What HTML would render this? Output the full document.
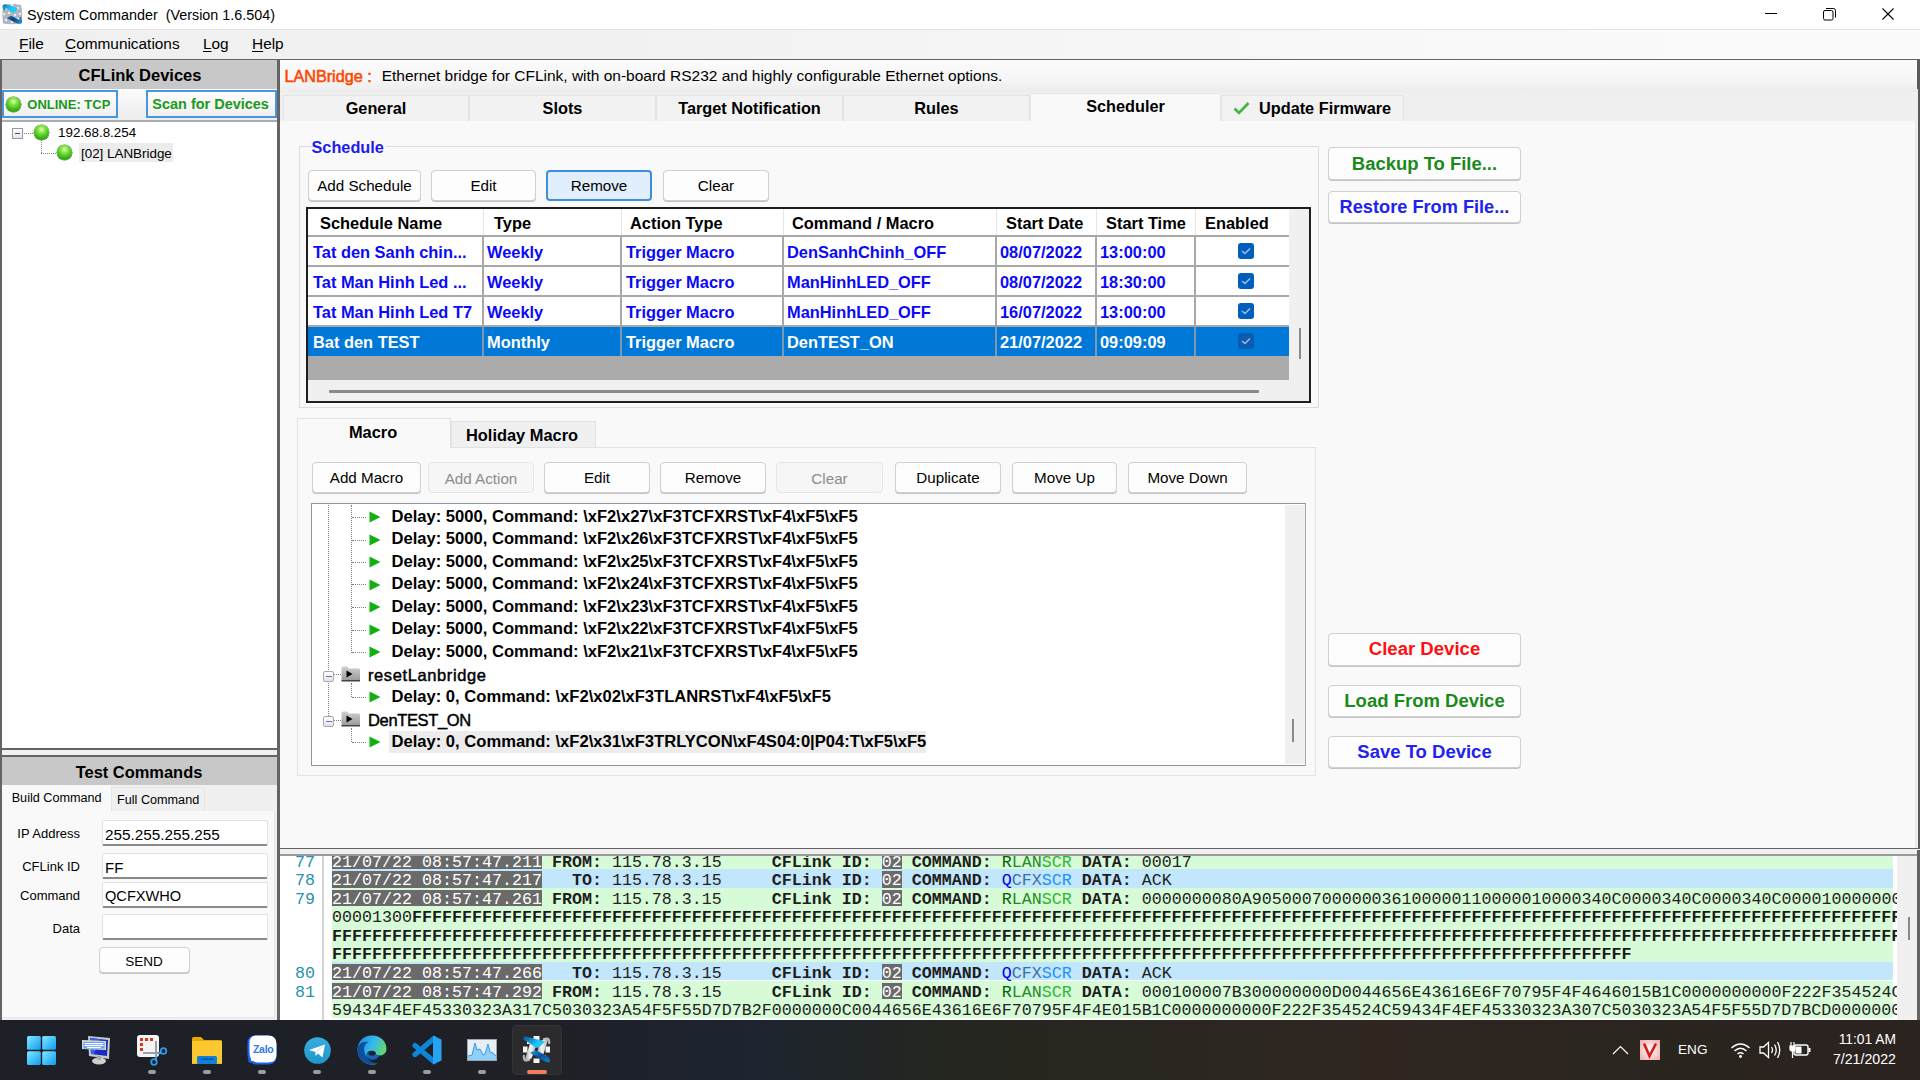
<!DOCTYPE html><html><head><meta charset="utf-8"><style>
html,body{margin:0;padding:0;}
body{width:1920px;height:1080px;overflow:hidden;position:relative;background:#f0f0f0;font-family:"Liberation Sans",sans-serif;}
div{box-sizing:border-box;}
.btn{position:absolute;background:#fdfdfd;border:1px solid #d0d0d0;border-radius:4px;box-shadow:0 1px 0 #c4c4c4;}
.mono{font-family:"Liberation Mono",monospace;}
</style></head><body>
<div style="position:absolute;left:0px;top:0px;width:1920px;height:29px;background:#fff"></div>
<svg style="position:absolute;left:0px;top:0px" width="30" height="29" viewBox="0 0 30 29">
<defs><linearGradient id="ib1" x1="0" y1="0" x2="1" y2="0.5"><stop offset="0" stop-color="#1a6fb5"/><stop offset="0.7" stop-color="#12d0ff"/></linearGradient>
<linearGradient id="ib2" x1="0" y1="0" x2="1" y2="0.3"><stop offset="0" stop-color="#1a7ac0"/><stop offset="0.5" stop-color="#0a3d78"/><stop offset="1" stop-color="#1a8ad0"/></linearGradient></defs>
<path d="M3 5 Q12 3 21 5 Q23 14 21.5 23.5 Q12 25 3 23.5 Q1.5 14 3 5Z" fill="#b4b4bc"/>
<g fill="#eef2f6" opacity="0.9"><circle cx="6" cy="8" r="1.3"/><circle cx="12" cy="5" r="1.3"/><circle cx="18" cy="8" r="1.3"/><circle cx="4" cy="14" r="1.3"/><circle cx="9" cy="13" r="1.3"/><circle cx="15" cy="15" r="1.3"/><circle cx="20" cy="14" r="1.3"/><circle cx="6" cy="20" r="1.3"/><circle cx="12" cy="22" r="1.3"/><circle cx="18" cy="19" r="1.3"/></g>
<path d="M2.5 6 Q3 3.8 5.5 4.3 Q11 6 17.5 8 Q16.5 11.5 13.5 12.8 Q10 11.5 7 8.5 Q5 7.5 4.5 11.5 Q2.5 9.5 2.5 6Z" fill="url(#ib1)"/>
<path d="M7 18.5 Q9 15.5 11.5 16 Q15.5 18.5 19.5 20 Q19.5 17.5 20 16.5 Q22.5 19 22 23 Q19.5 24.8 15 22.5 Q10 19.5 7 18.5Z" fill="url(#ib2)"/>
</svg>
<div style="position:absolute;left:27px;top:7.85px;font-size:14.35px;line-height:14.35px;font-weight:400;color:#000;white-space:pre;">System Commander&nbsp; (Version 1.6.504)</div>
<div style="position:absolute;left:1765px;top:13px;width:12px;height:1px;background:#000"></div>
<svg style="position:absolute;left:1823px;top:8px" width="13" height="13" viewBox="0 0 13 13"><rect x="0.5" y="2.5" width="9.5" height="9.5" rx="1.5" fill="none" stroke="#000" stroke-width="1"/><path d="M3 0.5 H10.5 Q12.5 0.5 12.5 2.5 V9.5" fill="none" stroke="#000" stroke-width="1"/></svg>
<svg style="position:absolute;left:1882px;top:8px" width="12" height="12" viewBox="0 0 12 12"><path d="M0.5 0.5 L11.5 11.5 M11.5 0.5 L0.5 11.5" stroke="#000" stroke-width="1.1"/></svg>
<div style="position:absolute;left:0px;top:29px;width:1920px;height:30px;background:linear-gradient(90deg,#f0f0f0 0,#f1f1f1 600px,#f6f6f6 1100px,#f9f9f9 1500px,#fbfbfb 1920px);border-top:1px solid #e4e4e4"></div>
<div style="position:absolute;left:19px;top:35.96px;font-size:15.4px;line-height:15.4px;font-weight:400;color:#000;white-space:pre;"><u style="text-underline-offset:2px">F</u>ile</div>
<div style="position:absolute;left:65px;top:35.96px;font-size:15.4px;line-height:15.4px;font-weight:400;color:#000;white-space:pre;"><u style="text-underline-offset:2px">C</u>ommunications</div>
<div style="position:absolute;left:203px;top:35.96px;font-size:15.4px;line-height:15.4px;font-weight:400;color:#000;white-space:pre;"><u style="text-underline-offset:2px">L</u>og</div>
<div style="position:absolute;left:252px;top:35.96px;font-size:15.4px;line-height:15.4px;font-weight:400;color:#000;white-space:pre;"><u style="text-underline-offset:2px">H</u>elp</div>
<div style="position:absolute;left:0px;top:59px;width:1920px;height:1px;background:#646464"></div>
<div style="position:absolute;left:0px;top:59px;width:2px;height:961px;background:#646464"></div>
<div style="position:absolute;left:2px;top:60px;width:275px;height:29px;background:#c8c8c8"></div>
<div style="position:absolute;left:140px;top:67.03px;font-size:16.5px;line-height:16.5px;font-weight:700;color:#000;white-space:pre;transform:translateX(-50%)">CFLink Devices</div>
<div style="position:absolute;left:2px;top:89px;width:275px;height:32px;background:linear-gradient(#fbfbfb,#ececec)"></div>
<div style="position:absolute;left:2px;top:90px;width:116px;height:28px;background:linear-gradient(#fdfdfd,#f0f0f0);border:2px solid #4796e2"></div>
<div style="position:absolute;left:146px;top:90px;width:131px;height:28px;background:linear-gradient(#fdfdfd,#f0f0f0);border:2px solid #4796e2"></div>
<div style="position:absolute;left:6px;top:97px;width:15px;height:15px;border-radius:50%;background:radial-gradient(circle at 50% 30%,#d8ffb0 0,#7ee040 30%,#2fae10 70%,#1a7a08 100%);box-shadow:0 0 0 0.5px #3a8a20"></div>
<div style="position:absolute;left:27.3px;top:98.00px;font-size:13px;line-height:13px;font-weight:700;color:#1a9a1a;white-space:pre;">ONLINE: TCP</div>
<div style="position:absolute;left:152.3px;top:96.74px;font-size:14.48px;line-height:14.48px;font-weight:700;color:#1a9a1a;white-space:pre;">Scan for Devices</div>
<div style="position:absolute;left:2px;top:122px;width:275px;height:626px;background:#fff"></div>
<div style="position:absolute;left:2px;top:120px;width:275px;height:2px;background:#a9adb2"></div>
<div style="position:absolute;left:12px;top:128px;width:11px;height:11px;border:1px solid #9a9a9a;background:linear-gradient(#fff,#e6e6e6)"></div>
<div style="position:absolute;left:15px;top:133px;width:5px;height:1px;background:#3050a0"></div>
<div style="position:absolute;left:24px;top:133px;width:9px;border-top:1px dotted #808080"></div>
<div style="position:absolute;left:34px;top:125px;width:15px;height:15px;border-radius:50%;background:radial-gradient(circle at 50% 30%,#d8ffb0 0,#7ee040 30%,#2fae10 70%,#1a7a08 100%);box-shadow:0 0 0 0.5px #3a8a20"></div>
<div style="position:absolute;left:58px;top:126.16px;font-size:13.4px;line-height:13.4px;font-weight:400;color:#000;white-space:pre;">192.68.8.254</div>
<div style="position:absolute;left:41px;top:140px;height:13px;border-left:1px dotted #808080"></div>
<div style="position:absolute;left:41px;top:153px;width:15px;border-top:1px dotted #808080"></div>
<div style="position:absolute;left:57px;top:145px;width:15px;height:15px;border-radius:50%;background:radial-gradient(circle at 50% 30%,#d8ffb0 0,#7ee040 30%,#2fae10 70%,#1a7a08 100%);box-shadow:0 0 0 0.5px #3a8a20"></div>
<div style="position:absolute;left:79px;top:143px;width:94px;height:19px;background:#ececec"></div>
<div style="position:absolute;left:81px;top:146.66px;font-size:13.4px;line-height:13.4px;font-weight:400;color:#000;white-space:pre;">[02] LANBridge</div>
<div style="position:absolute;left:0px;top:748px;width:277px;height:2px;background:#646464"></div>
<div style="position:absolute;left:2px;top:750px;width:275px;height:5px;background:#f0f0f0"></div>
<div style="position:absolute;left:0px;top:755px;width:277px;height:2px;background:#646464"></div>
<div style="position:absolute;left:2px;top:757px;width:275px;height:28px;background:#c8c8c8"></div>
<div style="position:absolute;left:139px;top:764.08px;font-size:16.45px;line-height:16.45px;font-weight:700;color:#000;white-space:pre;transform:translateX(-50%)">Test Commands</div>
<div style="position:absolute;left:2px;top:785px;width:275px;height:235px;background:#f0f0f0"></div>
<div style="position:absolute;left:2px;top:811px;width:273px;height:207px;background:#f9f9f9;border-right:1px solid #e6e6e6;border-bottom:1px solid #e6e6e6"></div>
<div style="position:absolute;left:2px;top:785px;width:109px;height:27px;background:#f9f9f9"></div>
<div style="position:absolute;left:111px;top:787px;width:94px;height:24px;background:#f0f0f0;border:1px solid #e4e4e4;border-bottom:none"></div>
<div style="position:absolute;left:11.7px;top:792.09px;font-size:12.65px;line-height:12.65px;font-weight:400;color:#000;white-space:pre;">Build Command</div>
<div style="position:absolute;left:117px;top:794.29px;font-size:12.65px;line-height:12.65px;font-weight:400;color:#000;white-space:pre;">Full Command</div>
<div style="position:absolute;left:0;width:80px;top:826.4px;text-align:right;font-size:13px;line-height:16px;white-space:pre">IP Address</div>
<div style="position:absolute;left:102px;top:820px;width:166px;height:26px;background:#fff;border:1px solid #e2e2e2;border-bottom:2px solid #8a8a8a;border-radius:2px"></div>
<div style="position:absolute;left:105px;top:826.95px;font-size:15.3px;line-height:15.3px;font-weight:400;color:#000;white-space:pre;">255.255.255.255</div>
<div style="position:absolute;left:0;width:80px;top:859.0px;text-align:right;font-size:13px;line-height:16px;white-space:pre">CFLink ID</div>
<div style="position:absolute;left:102px;top:853px;width:166px;height:26px;background:#fff;border:1px solid #e2e2e2;border-bottom:2px solid #8a8a8a;border-radius:2px"></div>
<div style="position:absolute;left:105px;top:859.80px;font-size:15px;line-height:15px;font-weight:400;color:#000;white-space:pre;">FF</div>
<div style="position:absolute;left:0;width:80px;top:888.0px;text-align:right;font-size:13px;line-height:16px;white-space:pre">Command</div>
<div style="position:absolute;left:102px;top:882px;width:166px;height:26px;background:#fff;border:1px solid #e2e2e2;border-bottom:2px solid #8a8a8a;border-radius:2px"></div>
<div style="position:absolute;left:105px;top:889.14px;font-size:14.6px;line-height:14.6px;font-weight:400;color:#000;white-space:pre;">QCFXWHO</div>
<div style="position:absolute;left:0;width:80px;top:921.0px;text-align:right;font-size:13px;line-height:16px;white-space:pre">Data</div>
<div style="position:absolute;left:102px;top:914px;width:166px;height:26px;background:#fff;border:1px solid #e2e2e2;border-bottom:2px solid #8a8a8a;border-radius:2px"></div>
<div class="btn" style="left:99px;top:947px;width:91px;height:26px"></div>
<div style="position:absolute;left:144px;top:954.57px;font-size:13.5px;line-height:13.5px;font-weight:400;color:#000;white-space:pre;transform:translateX(-50%)">SEND</div>
<div style="position:absolute;left:277px;top:60px;width:3px;height:960px;background:#646464"></div>
<div style="position:absolute;left:280px;top:60px;width:1640px;height:32px;background:linear-gradient(#fbfbfb 0,#f6f6f6 60%,#ececec 100%)"></div>
<div style="position:absolute;left:284.4px;top:67.79px;font-size:16.2px;line-height:16.2px;font-weight:400;color:#ff4500;white-space:pre;-webkit-text-stroke:0.55px #ff4500">LANBridge : </div>
<div style="position:absolute;left:381.7px;top:68.39px;font-size:15.49px;line-height:15.49px;font-weight:400;color:#000;white-space:pre;">Ethernet bridge for CFLink, with on-board RS232 and highly configurable Ethernet options.</div>
<div style="position:absolute;left:280px;top:92px;width:1637px;height:29px;background:#efefef"></div>
<div style="position:absolute;left:283px;top:95px;width:186px;height:26px;background:#f2f2f2;border:1px solid #e4e4e4;border-bottom:none"></div>
<div style="position:absolute;left:376.0px;top:100.20px;font-size:16.3px;line-height:16.3px;font-weight:700;color:#000;white-space:pre;transform:translateX(-50%)">General</div>
<div style="position:absolute;left:469px;top:95px;width:187px;height:26px;background:#f2f2f2;border:1px solid #e4e4e4;border-bottom:none"></div>
<div style="position:absolute;left:562.5px;top:100.20px;font-size:16.3px;line-height:16.3px;font-weight:700;color:#000;white-space:pre;transform:translateX(-50%)">Slots</div>
<div style="position:absolute;left:656px;top:95px;width:187px;height:26px;background:#f2f2f2;border:1px solid #e4e4e4;border-bottom:none"></div>
<div style="position:absolute;left:749.5px;top:100.20px;font-size:16.3px;line-height:16.3px;font-weight:700;color:#000;white-space:pre;transform:translateX(-50%)">Target Notification</div>
<div style="position:absolute;left:843px;top:95px;width:187px;height:26px;background:#f2f2f2;border:1px solid #e4e4e4;border-bottom:none"></div>
<div style="position:absolute;left:936.5px;top:100.20px;font-size:16.3px;line-height:16.3px;font-weight:700;color:#000;white-space:pre;transform:translateX(-50%)">Rules</div>
<div style="position:absolute;left:1030px;top:93px;width:191px;height:30px;background:#f9f9f9;border:1px solid #e8e8e8;border-bottom:none"></div>
<div style="position:absolute;left:1125.5px;top:98.20px;font-size:16.3px;line-height:16.3px;font-weight:700;color:#000;white-space:pre;transform:translateX(-50%)">Scheduler</div>
<div style="position:absolute;left:1221px;top:95px;width:183px;height:26px;background:#f2f2f2;border:1px solid #e4e4e4;border-bottom:none"></div>
<svg style="position:absolute;left:1233px;top:101px" width="17" height="14" viewBox="0 0 17 14"><path d="M1.5 7.5 L6 12 L15.5 2" stroke="#3cb83c" stroke-width="2.6" fill="none"/></svg>
<div style="position:absolute;left:1259px;top:100.20px;font-size:16.3px;line-height:16.3px;font-weight:700;color:#000;white-space:pre;">Update Firmware</div>
<div style="position:absolute;left:280px;top:121px;width:1637px;height:727px;background:#f9f9f9"></div>
<div style="position:absolute;left:1915px;top:121px;width:2px;height:727px;background:#ececec"></div>
<div style="position:absolute;left:1918px;top:60px;width:2px;height:790px;background:#5a5a5a"></div>
<div style="position:absolute;left:1917px;top:89px;width:1px;height:760px;background:#efefef"></div>
<div style="position:absolute;left:1917px;top:60px;width:3px;height:29px;background:#5a5a5a"></div>
<div style="position:absolute;left:299px;top:146px;width:20px;height:262px;border-left:1px solid #dcdcdc;border-top:1px solid #dcdcdc"></div>
<div style="position:absolute;left:386px;top:146px;width:933px;height:262px;border-right:1px solid #dcdcdc;border-top:1px solid #dcdcdc;border-bottom:1px solid #dcdcdc"></div>
<div style="position:absolute;left:299px;top:407px;width:90px;height:1px;background:#dcdcdc"></div>
<div style="position:absolute;left:311.5px;top:139.20px;font-size:16.3px;line-height:16.3px;font-weight:700;color:#1c1cf0;white-space:pre;">Schedule</div>
<div class="btn" style="left:308px;top:170px;width:113px;height:31px;"></div>
<div style="position:absolute;left:364.5px;top:178.11px;font-size:15.2px;line-height:15.2px;font-weight:400;color:#000;white-space:pre;transform:translateX(-50%);">Add Schedule</div>
<div class="btn" style="left:431px;top:170px;width:105px;height:31px;"></div>
<div style="position:absolute;left:483.5px;top:178.11px;font-size:15.2px;line-height:15.2px;font-weight:400;color:#000;white-space:pre;transform:translateX(-50%);">Edit</div>
<div class="btn" style="left:546px;top:170px;width:106px;height:31px;background:#e1eefb;border:2px solid #3d8ee0;box-shadow:none;"></div>
<div style="position:absolute;left:599.0px;top:178.11px;font-size:15.2px;line-height:15.2px;font-weight:400;color:#000;white-space:pre;transform:translateX(-50%);">Remove</div>
<div class="btn" style="left:663px;top:170px;width:106px;height:31px;"></div>
<div style="position:absolute;left:716.0px;top:178.11px;font-size:15.2px;line-height:15.2px;font-weight:400;color:#000;white-space:pre;transform:translateX(-50%);">Clear</div>
<div style="position:absolute;left:306px;top:207px;width:1005px;height:196px;border:2px solid #1e1e1e;background:#f0f0f0"></div>
<div style="position:absolute;left:308px;top:209px;width:981px;height:27px;background:#fff"></div>
<div style="position:absolute;left:320px;top:215.12px;font-size:16.4px;line-height:16.4px;font-weight:700;color:#000;white-space:pre;">Schedule Name</div>
<div style="position:absolute;left:494px;top:215.12px;font-size:16.4px;line-height:16.4px;font-weight:700;color:#000;white-space:pre;">Type</div>
<div style="position:absolute;left:630px;top:215.12px;font-size:16.4px;line-height:16.4px;font-weight:700;color:#000;white-space:pre;">Action Type</div>
<div style="position:absolute;left:792px;top:215.12px;font-size:16.4px;line-height:16.4px;font-weight:700;color:#000;white-space:pre;">Command / Macro</div>
<div style="position:absolute;left:1006px;top:215.12px;font-size:16.4px;line-height:16.4px;font-weight:700;color:#000;white-space:pre;">Start Date</div>
<div style="position:absolute;left:1106px;top:215.12px;font-size:16.4px;line-height:16.4px;font-weight:700;color:#000;white-space:pre;">Start Time</div>
<div style="position:absolute;left:1205px;top:215.12px;font-size:16.4px;line-height:16.4px;font-weight:700;color:#000;white-space:pre;">Enabled</div>
<div style="position:absolute;left:483px;top:209px;width:1px;height:27px;background:#e6e6e6"></div>
<div style="position:absolute;left:621px;top:209px;width:1px;height:27px;background:#e6e6e6"></div>
<div style="position:absolute;left:783px;top:209px;width:1px;height:27px;background:#e6e6e6"></div>
<div style="position:absolute;left:996px;top:209px;width:1px;height:27px;background:#e6e6e6"></div>
<div style="position:absolute;left:1096px;top:209px;width:1px;height:27px;background:#e6e6e6"></div>
<div style="position:absolute;left:1195px;top:209px;width:1px;height:27px;background:#e6e6e6"></div>
<div style="position:absolute;left:308px;top:236px;width:981px;height:30px;background:#fff"></div>
<div style="position:absolute;left:308px;top:235px;width:981px;height:2px;background:#a8a8a8"></div>
<div style="position:absolute;left:482px;top:236px;width:2px;height:30px;background:#a8a8a8"></div>
<div style="position:absolute;left:620px;top:236px;width:2px;height:30px;background:#a8a8a8"></div>
<div style="position:absolute;left:782px;top:236px;width:2px;height:30px;background:#a8a8a8"></div>
<div style="position:absolute;left:995px;top:236px;width:2px;height:30px;background:#a8a8a8"></div>
<div style="position:absolute;left:1095px;top:236px;width:2px;height:30px;background:#a8a8a8"></div>
<div style="position:absolute;left:1194px;top:236px;width:2px;height:30px;background:#a8a8a8"></div>
<div style="position:absolute;left:313px;top:243.62px;font-size:16.4px;line-height:16.4px;font-weight:700;color:#0a0af8;white-space:pre;">Tat den Sanh chin...</div>
<div style="position:absolute;left:487px;top:243.62px;font-size:16.4px;line-height:16.4px;font-weight:700;color:#0a0af8;white-space:pre;">Weekly</div>
<div style="position:absolute;left:626px;top:243.62px;font-size:16.4px;line-height:16.4px;font-weight:700;color:#0a0af8;white-space:pre;">Trigger Macro</div>
<div style="position:absolute;left:787px;top:243.62px;font-size:16.4px;line-height:16.4px;font-weight:700;color:#0a0af8;white-space:pre;">DenSanhChinh_OFF</div>
<div style="position:absolute;left:1000px;top:243.62px;font-size:16.4px;line-height:16.4px;font-weight:700;color:#0a0af8;white-space:pre;">08/07/2022</div>
<div style="position:absolute;left:1100px;top:243.62px;font-size:16.4px;line-height:16.4px;font-weight:700;color:#0a0af8;white-space:pre;">13:00:00</div>
<div style="position:absolute;left:1238px;top:243px;width:16px;height:16px;border-radius:3px;background:#005fbc"><svg width="16" height="16" viewBox="0 0 16 16" style="position:absolute;left:0;top:0"><path d="M4 8 L7 10.6 L12 5.6" stroke="#fff" stroke-width="1.4" fill="none" opacity="0.62"/></svg></div>
<div style="position:absolute;left:308px;top:266px;width:981px;height:30px;background:#fff"></div>
<div style="position:absolute;left:308px;top:265px;width:981px;height:2px;background:#a8a8a8"></div>
<div style="position:absolute;left:482px;top:266px;width:2px;height:30px;background:#a8a8a8"></div>
<div style="position:absolute;left:620px;top:266px;width:2px;height:30px;background:#a8a8a8"></div>
<div style="position:absolute;left:782px;top:266px;width:2px;height:30px;background:#a8a8a8"></div>
<div style="position:absolute;left:995px;top:266px;width:2px;height:30px;background:#a8a8a8"></div>
<div style="position:absolute;left:1095px;top:266px;width:2px;height:30px;background:#a8a8a8"></div>
<div style="position:absolute;left:1194px;top:266px;width:2px;height:30px;background:#a8a8a8"></div>
<div style="position:absolute;left:313px;top:273.62px;font-size:16.4px;line-height:16.4px;font-weight:700;color:#0a0af8;white-space:pre;">Tat Man Hinh Led ...</div>
<div style="position:absolute;left:487px;top:273.62px;font-size:16.4px;line-height:16.4px;font-weight:700;color:#0a0af8;white-space:pre;">Weekly</div>
<div style="position:absolute;left:626px;top:273.62px;font-size:16.4px;line-height:16.4px;font-weight:700;color:#0a0af8;white-space:pre;">Trigger Macro</div>
<div style="position:absolute;left:787px;top:273.62px;font-size:16.4px;line-height:16.4px;font-weight:700;color:#0a0af8;white-space:pre;">ManHinhLED_OFF</div>
<div style="position:absolute;left:1000px;top:273.62px;font-size:16.4px;line-height:16.4px;font-weight:700;color:#0a0af8;white-space:pre;">08/07/2022</div>
<div style="position:absolute;left:1100px;top:273.62px;font-size:16.4px;line-height:16.4px;font-weight:700;color:#0a0af8;white-space:pre;">18:30:00</div>
<div style="position:absolute;left:1238px;top:273px;width:16px;height:16px;border-radius:3px;background:#005fbc"><svg width="16" height="16" viewBox="0 0 16 16" style="position:absolute;left:0;top:0"><path d="M4 8 L7 10.6 L12 5.6" stroke="#fff" stroke-width="1.4" fill="none" opacity="0.62"/></svg></div>
<div style="position:absolute;left:308px;top:296px;width:981px;height:30px;background:#fff"></div>
<div style="position:absolute;left:308px;top:295px;width:981px;height:2px;background:#a8a8a8"></div>
<div style="position:absolute;left:482px;top:296px;width:2px;height:30px;background:#a8a8a8"></div>
<div style="position:absolute;left:620px;top:296px;width:2px;height:30px;background:#a8a8a8"></div>
<div style="position:absolute;left:782px;top:296px;width:2px;height:30px;background:#a8a8a8"></div>
<div style="position:absolute;left:995px;top:296px;width:2px;height:30px;background:#a8a8a8"></div>
<div style="position:absolute;left:1095px;top:296px;width:2px;height:30px;background:#a8a8a8"></div>
<div style="position:absolute;left:1194px;top:296px;width:2px;height:30px;background:#a8a8a8"></div>
<div style="position:absolute;left:313px;top:303.62px;font-size:16.4px;line-height:16.4px;font-weight:700;color:#0a0af8;white-space:pre;">Tat Man Hinh Led T7</div>
<div style="position:absolute;left:487px;top:303.62px;font-size:16.4px;line-height:16.4px;font-weight:700;color:#0a0af8;white-space:pre;">Weekly</div>
<div style="position:absolute;left:626px;top:303.62px;font-size:16.4px;line-height:16.4px;font-weight:700;color:#0a0af8;white-space:pre;">Trigger Macro</div>
<div style="position:absolute;left:787px;top:303.62px;font-size:16.4px;line-height:16.4px;font-weight:700;color:#0a0af8;white-space:pre;">ManHinhLED_OFF</div>
<div style="position:absolute;left:1000px;top:303.62px;font-size:16.4px;line-height:16.4px;font-weight:700;color:#0a0af8;white-space:pre;">16/07/2022</div>
<div style="position:absolute;left:1100px;top:303.62px;font-size:16.4px;line-height:16.4px;font-weight:700;color:#0a0af8;white-space:pre;">13:00:00</div>
<div style="position:absolute;left:1238px;top:303px;width:16px;height:16px;border-radius:3px;background:#005fbc"><svg width="16" height="16" viewBox="0 0 16 16" style="position:absolute;left:0;top:0"><path d="M4 8 L7 10.6 L12 5.6" stroke="#fff" stroke-width="1.4" fill="none" opacity="0.62"/></svg></div>
<div style="position:absolute;left:308px;top:326px;width:981px;height:30px;background:#0078d7"></div>
<div style="position:absolute;left:308px;top:325px;width:981px;height:2px;background:#a8a8a8"></div>
<div style="position:absolute;left:482px;top:326px;width:2px;height:30px;background:#7f98b0"></div>
<div style="position:absolute;left:620px;top:326px;width:2px;height:30px;background:#7f98b0"></div>
<div style="position:absolute;left:782px;top:326px;width:2px;height:30px;background:#7f98b0"></div>
<div style="position:absolute;left:995px;top:326px;width:2px;height:30px;background:#7f98b0"></div>
<div style="position:absolute;left:1095px;top:326px;width:2px;height:30px;background:#7f98b0"></div>
<div style="position:absolute;left:1194px;top:326px;width:2px;height:30px;background:#7f98b0"></div>
<div style="position:absolute;left:313px;top:333.62px;font-size:16.4px;line-height:16.4px;font-weight:700;color:#fff;white-space:pre;">Bat den TEST</div>
<div style="position:absolute;left:487px;top:333.62px;font-size:16.4px;line-height:16.4px;font-weight:700;color:#fff;white-space:pre;">Monthly</div>
<div style="position:absolute;left:626px;top:333.62px;font-size:16.4px;line-height:16.4px;font-weight:700;color:#fff;white-space:pre;">Trigger Macro</div>
<div style="position:absolute;left:787px;top:333.62px;font-size:16.4px;line-height:16.4px;font-weight:700;color:#fff;white-space:pre;">DenTEST_ON</div>
<div style="position:absolute;left:1000px;top:333.62px;font-size:16.4px;line-height:16.4px;font-weight:700;color:#fff;white-space:pre;">21/07/2022</div>
<div style="position:absolute;left:1100px;top:333.62px;font-size:16.4px;line-height:16.4px;font-weight:700;color:#fff;white-space:pre;">09:09:09</div>
<div style="position:absolute;left:1238px;top:333px;width:16px;height:16px;border-radius:3px;background:#0a5cb0"><svg width="16" height="16" viewBox="0 0 16 16" style="position:absolute;left:0;top:0"><path d="M4 8 L7 10.6 L12 5.6" stroke="#fff" stroke-width="1.4" fill="none" opacity="0.6"/></svg></div>
<div style="position:absolute;left:308px;top:356px;width:981px;height:24px;background:#ababab"></div>
<div style="position:absolute;left:1299px;top:328px;width:2px;height:31px;background:#8a8a8a"></div>
<div style="position:absolute;left:329px;top:390px;width:930px;height:3px;background:#8a8a8a;border-radius:1px"></div>
<div class="btn" style="left:1328px;top:147px;width:193px;height:33px;"></div>
<div style="position:absolute;left:1424.5px;top:154.51px;font-size:18.47px;line-height:18.47px;font-weight:700;color:#1a8a1a;white-space:pre;transform:translateX(-50%);">Backup To File...</div>
<div class="btn" style="left:1328px;top:191px;width:193px;height:32px;"></div>
<div style="position:absolute;left:1424.5px;top:198.15px;font-size:18.2px;line-height:18.2px;font-weight:700;color:#2222ee;white-space:pre;transform:translateX(-50%);">Restore From File...</div>
<div class="btn" style="left:1328px;top:633px;width:193px;height:33px;"></div>
<div style="position:absolute;left:1424.5px;top:640.46px;font-size:18.59px;line-height:18.59px;font-weight:700;color:#ff1010;white-space:pre;transform:translateX(-50%);">Clear Device</div>
<div class="btn" style="left:1328px;top:685px;width:193px;height:32px;"></div>
<div style="position:absolute;left:1424.5px;top:692.00px;font-size:18.5px;line-height:18.5px;font-weight:700;color:#1a8a1a;white-space:pre;transform:translateX(-50%);">Load From Device</div>
<div class="btn" style="left:1328px;top:736px;width:193px;height:32px;"></div>
<div style="position:absolute;left:1424.5px;top:743.00px;font-size:18.5px;line-height:18.5px;font-weight:700;color:#2222ee;white-space:pre;transform:translateX(-50%);">Save To Device</div>
<div style="position:absolute;left:297px;top:447px;width:1019px;height:329px;border:1px solid #e2e2e2;background:#f9f9f9"></div>
<div style="position:absolute;left:297px;top:418px;width:154px;height:30px;background:#f9f9f9;border:1px solid #e2e2e2;border-bottom:none"></div>
<div style="position:absolute;left:451px;top:421px;width:145px;height:26px;background:#f0f0f0;border:1px solid #e2e2e2;border-bottom:none"></div>
<div style="position:absolute;left:348.9px;top:423.92px;font-size:16.4px;line-height:16.4px;font-weight:700;color:#000;white-space:pre;">Macro</div>
<div style="position:absolute;left:466px;top:426.62px;font-size:16.4px;line-height:16.4px;font-weight:700;color:#000;white-space:pre;">Holiday Macro</div>
<div class="btn" style="left:312px;top:462px;width:109px;height:31px;"></div>
<div style="position:absolute;left:366.5px;top:470.11px;font-size:15.2px;line-height:15.2px;font-weight:400;color:#000;white-space:pre;transform:translateX(-50%);">Add Macro</div>
<div class="btn" style="left:428px;top:462px;width:106px;height:31px;background:#f6f6f6;border-color:#e6e6e6;box-shadow:none"></div>
<div style="position:absolute;left:481.0px;top:471.03px;font-size:15.2px;line-height:15.2px;font-weight:400;color:#8c8c8c;white-space:pre;transform:translateX(-50%)">Add Action</div>
<div class="btn" style="left:544px;top:462px;width:106px;height:31px;"></div>
<div style="position:absolute;left:597.0px;top:470.11px;font-size:15.2px;line-height:15.2px;font-weight:400;color:#000;white-space:pre;transform:translateX(-50%);">Edit</div>
<div class="btn" style="left:660px;top:462px;width:106px;height:31px;"></div>
<div style="position:absolute;left:713.0px;top:470.11px;font-size:15.2px;line-height:15.2px;font-weight:400;color:#000;white-space:pre;transform:translateX(-50%);">Remove</div>
<div class="btn" style="left:776px;top:462px;width:107px;height:31px;background:#f6f6f6;border-color:#e6e6e6;box-shadow:none"></div>
<div style="position:absolute;left:829.5px;top:471.03px;font-size:15.2px;line-height:15.2px;font-weight:400;color:#8c8c8c;white-space:pre;transform:translateX(-50%)">Clear</div>
<div class="btn" style="left:895px;top:462px;width:106px;height:31px;"></div>
<div style="position:absolute;left:948.0px;top:470.11px;font-size:15.2px;line-height:15.2px;font-weight:400;color:#000;white-space:pre;transform:translateX(-50%);">Duplicate</div>
<div class="btn" style="left:1012px;top:462px;width:105px;height:31px;"></div>
<div style="position:absolute;left:1064.5px;top:470.11px;font-size:15.2px;line-height:15.2px;font-weight:400;color:#000;white-space:pre;transform:translateX(-50%);">Move Up</div>
<div class="btn" style="left:1128px;top:462px;width:119px;height:31px;"></div>
<div style="position:absolute;left:1187.5px;top:470.11px;font-size:15.2px;line-height:15.2px;font-weight:400;color:#000;white-space:pre;transform:translateX(-50%);">Move Down</div>
<div style="position:absolute;left:311px;top:503px;width:995px;height:263px;background:#fff;border:1px solid #8c96a0;border-right:1px solid #a0a8b0"></div>
<div style="position:absolute;left:1285px;top:505px;width:20px;height:259px;background:#f0f0f0"></div>
<div style="position:absolute;left:1292px;top:719px;width:2px;height:23px;background:#8a8a8a"></div>
<div style="position:absolute;left:328px;top:505px;height:215px;border-left:1px dotted #808080"></div>
<div style="position:absolute;left:351px;top:505px;height:148px;border-left:1px dotted #808080"></div>
<div style="position:absolute;left:352px;top:517px;width:14px;border-top:1px dotted #808080"></div>
<svg style="position:absolute;left:369px;top:511px" width="12" height="12" viewBox="0 0 12 12"><path d="M0.5 0.5 L11.5 6 L0.5 11.5 Z" fill="#10b010"/></svg>
<div style="position:absolute;left:391.5px;top:508.97px;font-size:16.58px;line-height:16.58px;font-weight:700;color:#000;white-space:pre;">Delay: 5000, Command: \xF2\x27\xF3TCFXRST\xF4\xF5\xF5</div>
<div style="position:absolute;left:352px;top:540px;width:14px;border-top:1px dotted #808080"></div>
<svg style="position:absolute;left:369px;top:533.5px" width="12" height="12" viewBox="0 0 12 12"><path d="M0.5 0.5 L11.5 6 L0.5 11.5 Z" fill="#10b010"/></svg>
<div style="position:absolute;left:391.5px;top:531.47px;font-size:16.58px;line-height:16.58px;font-weight:700;color:#000;white-space:pre;">Delay: 5000, Command: \xF2\x26\xF3TCFXRST\xF4\xF5\xF5</div>
<div style="position:absolute;left:352px;top:562px;width:14px;border-top:1px dotted #808080"></div>
<svg style="position:absolute;left:369px;top:556px" width="12" height="12" viewBox="0 0 12 12"><path d="M0.5 0.5 L11.5 6 L0.5 11.5 Z" fill="#10b010"/></svg>
<div style="position:absolute;left:391.5px;top:553.97px;font-size:16.58px;line-height:16.58px;font-weight:700;color:#000;white-space:pre;">Delay: 5000, Command: \xF2\x25\xF3TCFXRST\xF4\xF5\xF5</div>
<div style="position:absolute;left:352px;top:584px;width:14px;border-top:1px dotted #808080"></div>
<svg style="position:absolute;left:369px;top:578.5px" width="12" height="12" viewBox="0 0 12 12"><path d="M0.5 0.5 L11.5 6 L0.5 11.5 Z" fill="#10b010"/></svg>
<div style="position:absolute;left:391.5px;top:576.47px;font-size:16.58px;line-height:16.58px;font-weight:700;color:#000;white-space:pre;">Delay: 5000, Command: \xF2\x24\xF3TCFXRST\xF4\xF5\xF5</div>
<div style="position:absolute;left:352px;top:607px;width:14px;border-top:1px dotted #808080"></div>
<svg style="position:absolute;left:369px;top:601px" width="12" height="12" viewBox="0 0 12 12"><path d="M0.5 0.5 L11.5 6 L0.5 11.5 Z" fill="#10b010"/></svg>
<div style="position:absolute;left:391.5px;top:598.97px;font-size:16.58px;line-height:16.58px;font-weight:700;color:#000;white-space:pre;">Delay: 5000, Command: \xF2\x23\xF3TCFXRST\xF4\xF5\xF5</div>
<div style="position:absolute;left:352px;top:630px;width:14px;border-top:1px dotted #808080"></div>
<svg style="position:absolute;left:369px;top:623.5px" width="12" height="12" viewBox="0 0 12 12"><path d="M0.5 0.5 L11.5 6 L0.5 11.5 Z" fill="#10b010"/></svg>
<div style="position:absolute;left:391.5px;top:621.47px;font-size:16.58px;line-height:16.58px;font-weight:700;color:#000;white-space:pre;">Delay: 5000, Command: \xF2\x22\xF3TCFXRST\xF4\xF5\xF5</div>
<div style="position:absolute;left:352px;top:652px;width:14px;border-top:1px dotted #808080"></div>
<svg style="position:absolute;left:369px;top:646px" width="12" height="12" viewBox="0 0 12 12"><path d="M0.5 0.5 L11.5 6 L0.5 11.5 Z" fill="#10b010"/></svg>
<div style="position:absolute;left:391.5px;top:643.97px;font-size:16.58px;line-height:16.58px;font-weight:700;color:#000;white-space:pre;">Delay: 5000, Command: \xF2\x21\xF3TCFXRST\xF4\xF5\xF5</div>
<div style="position:absolute;left:323px;top:670.5px;width:11px;height:11px;border:1px solid #a8a8a8;border-radius:2px;background:linear-gradient(#fff,#e4e4e4)"><div style="position:absolute;left:2px;top:4px;width:6px;height:1px;background:#5a72c0"></div></div>
<div style="position:absolute;left:334px;top:674px;width:7px;border-top:1px dotted #808080"></div>
<svg style="position:absolute;left:341px;top:665.5px" width="20" height="16" viewBox="0 0 20 16"><defs><linearGradient id="fg" x1="0" y1="0" x2="0" y2="1"><stop offset="0" stop-color="#cfcfcf"/><stop offset="1" stop-color="#9a9a9a"/></linearGradient></defs><path d="M0.5 2.5 Q0.5 0.5 2.5 0.5 H5.5 Q7 0.5 7.5 2.5 H17.5 Q19 2.5 19 4 V14.5 H0.5 Z" fill="url(#fg)"/><rect x="0.5" y="14" width="18.5" height="1.5" fill="#444"/><path d="M5.5 4.5 L11.5 8 L5.5 11.5 Z" fill="#000"/></svg>
<div style="position:absolute;left:368px;top:666.53px;font-size:16.5px;line-height:16.5px;font-weight:400;color:#000;white-space:pre;-webkit-text-stroke:0.45px #000;letter-spacing:0.6px">resetLanbridge</div>
<div style="position:absolute;left:323px;top:715.5px;width:11px;height:11px;border:1px solid #a8a8a8;border-radius:2px;background:linear-gradient(#fff,#e4e4e4)"><div style="position:absolute;left:2px;top:4px;width:6px;height:1px;background:#5a72c0"></div></div>
<div style="position:absolute;left:334px;top:720px;width:7px;border-top:1px dotted #808080"></div>
<svg style="position:absolute;left:341px;top:710.5px" width="20" height="16" viewBox="0 0 20 16"><defs><linearGradient id="fg" x1="0" y1="0" x2="0" y2="1"><stop offset="0" stop-color="#cfcfcf"/><stop offset="1" stop-color="#9a9a9a"/></linearGradient></defs><path d="M0.5 2.5 Q0.5 0.5 2.5 0.5 H5.5 Q7 0.5 7.5 2.5 H17.5 Q19 2.5 19 4 V14.5 H0.5 Z" fill="url(#fg)"/><rect x="0.5" y="14" width="18.5" height="1.5" fill="#444"/><path d="M5.5 4.5 L11.5 8 L5.5 11.5 Z" fill="#000"/></svg>
<div style="position:absolute;left:368px;top:711.53px;font-size:16.5px;line-height:16.5px;font-weight:400;color:#000;white-space:pre;-webkit-text-stroke:0.45px #000;letter-spacing:-0.35px">DenTEST_ON</div>
<div style="position:absolute;left:351px;top:683px;height:14px;border-left:1px dotted #808080"></div>
<div style="position:absolute;left:352px;top:697px;width:14px;border-top:1px dotted #808080"></div>
<svg style="position:absolute;left:369px;top:691px" width="12" height="12" viewBox="0 0 12 12"><path d="M0.5 0.5 L11.5 6 L0.5 11.5 Z" fill="#10b010"/></svg>
<div style="position:absolute;left:391.5px;top:688.97px;font-size:16.58px;line-height:16.58px;font-weight:700;color:#000;white-space:pre;">Delay: 0, Command: \xF2\x02\xF3TLANRST\xF4\xF5\xF5</div>
<div style="position:absolute;left:351px;top:728px;height:14px;border-left:1px dotted #808080"></div>
<div style="position:absolute;left:352px;top:742px;width:14px;border-top:1px dotted #808080"></div>
<svg style="position:absolute;left:369px;top:736px" width="12" height="12" viewBox="0 0 12 12"><path d="M0.5 0.5 L11.5 6 L0.5 11.5 Z" fill="#10b010"/></svg>
<div style="position:absolute;left:389px;top:731px;width:537px;height:22px;background:#ececec"></div>
<div style="position:absolute;left:391.5px;top:733.97px;font-size:16.58px;line-height:16.58px;font-weight:700;color:#000;white-space:pre;">Delay: 0, Command: \xF2\x31\xF3TRLYCON\xF4S04:0|P04:T\xF5\xF5</div>
<div style="position:absolute;left:280px;top:848px;width:1640px;height:1px;background:#646464"></div>
<div style="position:absolute;left:280px;top:849px;width:1640px;height:5px;background:#f0f0f0"></div>
<div style="position:absolute;left:280px;top:854px;width:1640px;height:2px;background:#9a9a9a"></div>
<div style="position:absolute;left:280px;top:856px;width:1637px;height:164px;background:#fff"></div>
<div style="position:absolute;left:322px;top:856px;width:2px;height:164px;background:#d4d4d4"></div>
<div style="position:absolute;left:1897px;top:856px;width:20px;height:164px;background:#f0f0f0"></div>
<div style="position:absolute;left:1908px;top:917px;width:2px;height:23px;background:#8a8a8a"></div>
<div style="position:absolute;left:280px;top:856px;width:1617px;height:164px;overflow:hidden">
<div style="position:absolute;left:52px;top:-5.35px;width:1561px;height:18.55px;background:#d7fbd7"></div>
<div style="position:absolute;left:52px;top:-3.35px;width:210px;height:16.4px;background:#6a6a6a"></div>
<div style="position:absolute;left:602px;top:-3.35px;width:20px;height:16.4px;background:#6a6a6a"></div>
<div class="mono" style="position:absolute;left:0;width:35px;top:-2.35px;height:18.55px;line-height:18.55px;text-align:right;font-size:16.67px;color:#2b91af">77</div>
<div class="mono" style="position:absolute;left:52px;top:-2.35px;height:18.55px;line-height:18.55px;font-size:16.667px;white-space:pre;color:#222"><span style="color:#fff;">21/07/22 08:57:47.211</span><span style=""> </span><span style="font-weight:700;color:#1e1e1e;">FROM:</span><span style=""> 115.78.3.15     </span><span style="font-weight:700;color:#1e1e1e;">CFLink ID:</span><span style=""> </span><span style="color:#fff;">02</span><span style=""> </span><span style="font-weight:700;color:#1e1e1e;">COMMAND:</span><span style=""> </span><span style="color:#006400;">R</span><span style="color:#228b22;">LAN</span><span style="color:#2eb82e;">SCR</span><span style=""> </span><span style="font-weight:700;color:#1e1e1e;">DATA:</span><span style=""> 00017</span></div>
<div style="position:absolute;left:52px;top:13.20px;width:1561px;height:18.55px;background:#c2e6fc"></div>
<div style="position:absolute;left:52px;top:15.20px;width:210px;height:16.4px;background:#6a6a6a"></div>
<div style="position:absolute;left:602px;top:15.20px;width:20px;height:16.4px;background:#6a6a6a"></div>
<div class="mono" style="position:absolute;left:0;width:35px;top:16.20px;height:18.55px;line-height:18.55px;text-align:right;font-size:16.67px;color:#2b91af">78</div>
<div class="mono" style="position:absolute;left:52px;top:16.20px;height:18.55px;line-height:18.55px;font-size:16.667px;white-space:pre;color:#222"><span style="color:#fff;">21/07/22 08:57:47.217</span><span style=""> </span><span style="font-weight:700;color:#1e1e1e;">  TO:</span><span style=""> 115.78.3.15     </span><span style="font-weight:700;color:#1e1e1e;">CFLink ID:</span><span style=""> </span><span style="color:#fff;">02</span><span style=""> </span><span style="font-weight:700;color:#1e1e1e;">COMMAND:</span><span style=""> </span><span style="color:#0000ee;">Q</span><span style="color:#3a6ea5;">CFX</span><span style="color:#1e90ff;">SCR</span><span style=""> </span><span style="font-weight:700;color:#1e1e1e;">DATA:</span><span style=""> ACK</span></div>
<div style="position:absolute;left:52px;top:31.75px;width:1561px;height:18.55px;background:#d7fbd7"></div>
<div style="position:absolute;left:52px;top:33.75px;width:210px;height:16.4px;background:#6a6a6a"></div>
<div style="position:absolute;left:602px;top:33.75px;width:20px;height:16.4px;background:#6a6a6a"></div>
<div class="mono" style="position:absolute;left:0;width:35px;top:34.75px;height:18.55px;line-height:18.55px;text-align:right;font-size:16.67px;color:#2b91af">79</div>
<div class="mono" style="position:absolute;left:52px;top:34.75px;height:18.55px;line-height:18.55px;font-size:16.667px;white-space:pre;color:#222"><span style="color:#fff;">21/07/22 08:57:47.261</span><span style=""> </span><span style="font-weight:700;color:#1e1e1e;">FROM:</span><span style=""> 115.78.3.15     </span><span style="font-weight:700;color:#1e1e1e;">CFLink ID:</span><span style=""> </span><span style="color:#fff;">02</span><span style=""> </span><span style="font-weight:700;color:#1e1e1e;">COMMAND:</span><span style=""> </span><span style="color:#006400;">R</span><span style="color:#228b22;">LAN</span><span style="color:#2eb82e;">SCR</span><span style=""> </span><span style="font-weight:700;color:#1e1e1e;">DATA:</span><span style=""> 0000000080A905000700000036100000110000010000340C0000340C0000340C000010000000C0</span></div>
<div style="position:absolute;left:52px;top:50.30px;width:1561px;height:18.55px;background:#d7fbd7"></div>
<div class="mono" style="position:absolute;left:52px;top:53.30px;height:18.55px;line-height:18.55px;font-size:16.667px;white-space:pre;color:#222"><span style="">00001300</span><span style="font-weight:700;color:#1a1a1a;">FFFFFFFFFFFFFFFFFFFFFFFFFFFFFFFFFFFFFFFFFFFFFFFFFFFFFFFFFFFFFFFFFFFFFFFFFFFFFFFFFFFFFFFFFFFFFFFFFFFFFFFFFFFFFFFFFFFFFFFFFFFFFFFFFFFFFFFFFFFFFFFFFFFFFFFFFFFFFFFF</span></div>
<div style="position:absolute;left:52px;top:68.85px;width:1561px;height:18.55px;background:#d7fbd7"></div>
<div class="mono" style="position:absolute;left:52px;top:71.85px;height:18.55px;line-height:18.55px;font-size:16.667px;white-space:pre;color:#222"><span style="font-weight:700;color:#1a1a1a;">FFFFFFFFFFFFFFFFFFFFFFFFFFFFFFFFFFFFFFFFFFFFFFFFFFFFFFFFFFFFFFFFFFFFFFFFFFFFFFFFFFFFFFFFFFFFFFFFFFFFFFFFFFFFFFFFFFFFFFFFFFFFFFFFFFFFFFFFFFFFFFFFFFFFFFFFFFFFFFFFFFFFFFFFFF</span></div>
<div style="position:absolute;left:52px;top:87.40px;width:1561px;height:18.55px;background:#d7fbd7"></div>
<div class="mono" style="position:absolute;left:52px;top:90.40px;height:18.55px;line-height:18.55px;font-size:16.667px;white-space:pre;color:#222"><span style="font-weight:700;color:#1a1a1a;">FFFFFFFFFFFFFFFFFFFFFFFFFFFFFFFFFFFFFFFFFFFFFFFFFFFFFFFFFFFFFFFFFFFFFFFFFFFFFFFFFFFFFFFFFFFFFFFFFFFFFFFFFFFFFFFFFFFFFFFFFFFFFFFFFF</span></div>
<div style="position:absolute;left:52px;top:105.95px;width:1561px;height:18.55px;background:#c2e6fc"></div>
<div style="position:absolute;left:52px;top:107.95px;width:210px;height:16.4px;background:#6a6a6a"></div>
<div style="position:absolute;left:602px;top:107.95px;width:20px;height:16.4px;background:#6a6a6a"></div>
<div class="mono" style="position:absolute;left:0;width:35px;top:108.95px;height:18.55px;line-height:18.55px;text-align:right;font-size:16.67px;color:#2b91af">80</div>
<div class="mono" style="position:absolute;left:52px;top:108.95px;height:18.55px;line-height:18.55px;font-size:16.667px;white-space:pre;color:#222"><span style="color:#fff;">21/07/22 08:57:47.266</span><span style=""> </span><span style="font-weight:700;color:#1e1e1e;">  TO:</span><span style=""> 115.78.3.15     </span><span style="font-weight:700;color:#1e1e1e;">CFLink ID:</span><span style=""> </span><span style="color:#fff;">02</span><span style=""> </span><span style="font-weight:700;color:#1e1e1e;">COMMAND:</span><span style=""> </span><span style="color:#0000ee;">Q</span><span style="color:#3a6ea5;">CFX</span><span style="color:#1e90ff;">SCR</span><span style=""> </span><span style="font-weight:700;color:#1e1e1e;">DATA:</span><span style=""> ACK</span></div>
<div style="position:absolute;left:52px;top:124.50px;width:1561px;height:18.55px;background:#d7fbd7"></div>
<div style="position:absolute;left:52px;top:126.50px;width:210px;height:16.4px;background:#6a6a6a"></div>
<div style="position:absolute;left:602px;top:126.50px;width:20px;height:16.4px;background:#6a6a6a"></div>
<div class="mono" style="position:absolute;left:0;width:35px;top:127.50px;height:18.55px;line-height:18.55px;text-align:right;font-size:16.67px;color:#2b91af">81</div>
<div class="mono" style="position:absolute;left:52px;top:127.50px;height:18.55px;line-height:18.55px;font-size:16.667px;white-space:pre;color:#222"><span style="color:#fff;">21/07/22 08:57:47.292</span><span style=""> </span><span style="font-weight:700;color:#1e1e1e;">FROM:</span><span style=""> 115.78.3.15     </span><span style="font-weight:700;color:#1e1e1e;">CFLink ID:</span><span style=""> </span><span style="color:#fff;">02</span><span style=""> </span><span style="font-weight:700;color:#1e1e1e;">COMMAND:</span><span style=""> </span><span style="color:#006400;">R</span><span style="color:#228b22;">LAN</span><span style="color:#2eb82e;">SCR</span><span style=""> </span><span style="font-weight:700;color:#1e1e1e;">DATA:</span><span style=""> 000100007B300000000D0044656E43616E6F70795F4F4646015B1C0000000000F222F354524C59</span></div>
<div style="position:absolute;left:52px;top:143.05px;width:1561px;height:18.55px;background:#d7fbd7"></div>
<div class="mono" style="position:absolute;left:52px;top:146.05px;height:18.55px;line-height:18.55px;font-size:16.667px;white-space:pre;color:#222"><span style="">59434F4EF45330323A317C5030323A54F5F55D7D7B2F0000000C0044656E43616E6F70795F4F4E015B1C0000000000F222F354524C59434F4EF45330323A307C5030323A54F5F55D7D7BCD0000000C00</span></div>
</div>
<div style="position:absolute;left:1897px;top:856px;width:23px;height:164px;background:#f0f0f0"></div>
<div style="position:absolute;left:1908px;top:917px;width:2px;height:23px;background:#8a8a8a"></div>
<div style="position:absolute;left:1917px;top:850px;width:3px;height:170px;background:#646464"></div>
<div style="position:absolute;left:0;top:1020px;width:1920px;height:60px;background:linear-gradient(90deg,#1c1f25 0px,#1d2026 300px,#1e2026 560px,#1d2430 740px,#24261f 950px,#2a2720 1150px,#2f2620 1380px,#2b2520 1600px,#2a231f 1920px)"></div>
<svg style="position:absolute;left:27px;top:1036px" width="29" height="29" viewBox="0 0 29 29"><defs><linearGradient id="wl" x1="0" y1="0" x2="1" y2="1"><stop offset="0" stop-color="#80eaff"/><stop offset="1" stop-color="#0f9af2"/></linearGradient></defs><g fill="url(#wl)"><rect x="0" y="0" width="13.8" height="13.8" rx="1.5"/><rect x="15.2" y="0" width="13.8" height="13.8" rx="1.5"/><rect x="0" y="15.2" width="13.8" height="13.8" rx="1.5"/><rect x="15.2" y="15.2" width="13.8" height="13.8" rx="1.5"/></g></svg>
<svg style="position:absolute;left:82px;top:1035px" width="30" height="30" viewBox="0 0 30 30"><path d="M6 1 L28 3 L27 24 L7 21 Z" fill="#c8c8c8"/><path d="M8 3 L26 5 L25 21 L9 19 Z" fill="#1a2bbf"/><path d="M8 3 L18 4 L12 19 L9 19Z" fill="#3d5cf0"/><ellipse cx="17" cy="26" rx="7" ry="3.5" fill="#cfcfcf"/><rect x="15" y="21" width="4" height="4" fill="#aaa"/><path d="M0 5 L24 6 L24 15 L0 14 Z" fill="#d6d6d6"/><rect x="1.5" y="7" width="21" height="6.5" fill="#5aa0f0"/><g fill="#fff"><rect x="2.5" y="8" width="19" height="1.2"/><rect x="2.5" y="10" width="19" height="1.2"/><rect x="5" y="12" width="14" height="1"/></g></svg>
<svg style="position:absolute;left:137px;top:1035px" width="31" height="31" viewBox="0 0 31 31"><rect x="0" y="0" width="22" height="22" rx="3" fill="#f4f4f4"/><g fill="#e0301e"><rect x="3" y="3" width="3" height="3"/><rect x="8" y="3" width="3" height="3"/><rect x="13" y="3" width="3" height="3"/><rect x="3" y="8" width="3" height="3"/><rect x="3" y="13" width="3" height="3"/></g><path d="M6 18 H24 M19 6 V26" stroke="#9aa0a6" stroke-width="2"/><circle cx="26.5" cy="16" r="2.8" fill="none" stroke="#2a9be8" stroke-width="1.8"/><circle cx="17" cy="27" r="2.8" fill="none" stroke="#2a9be8" stroke-width="1.8"/><path d="M21 18 L24.5 17 M19 24 L19 22" stroke="#2a9be8" stroke-width="1.8"/></svg>
<svg style="position:absolute;left:192px;top:1037px" width="30" height="27" viewBox="0 0 30 27"><path d="M0 1.5 Q0 0 1.5 0 H9 L12 3 H28.5 Q30 3 30 4.5 V27 H0 Z" fill="#e8a800"/><path d="M0 4 H30 V26.5 H0 Z" fill="#fcc832"/><rect x="5" y="19" width="20" height="8" rx="1.5" fill="#0f7fd8"/><rect x="9" y="21.5" width="12" height="1.3" fill="#0a4fa0"/></svg>
<svg style="position:absolute;left:247px;top:1035px" width="30" height="30" viewBox="0 0 30 30"><path d="M8 0.5 H21 Q29.5 0.5 29.5 9 V21 Q29.5 29.5 21 29.5 H10 Q6 29.5 4 27.5 Q1 28.5 1.5 25 Q0.5 22 0.5 18 V8 Q0.5 0.5 8 0.5Z" fill="#1a62f5"/><path d="M9 0.5 H21 Q29.5 0.5 29.5 9 V20 Q29.5 27.5 21 27.5 H11 Q8 27.5 6 26 Q3.5 26.5 4 24 Q2.5 21 2.5 17 V8 Q2.5 0.5 9 0.5Z" fill="#fdfdfd"/><text x="16.2" y="17.8" text-anchor="middle" font-family="Liberation Sans" font-weight="700" font-size="10.5" fill="#2a7cf4" letter-spacing="-0.3">Zalo</text></svg>
<svg style="position:absolute;left:304px;top:1037px" width="27" height="27" viewBox="0 0 27 27"><defs><linearGradient id="tg" x1="0" y1="0" x2="0" y2="1"><stop offset="0" stop-color="#37aee2"/><stop offset="1" stop-color="#1e96c8"/></linearGradient></defs><circle cx="13.5" cy="13.5" r="13.3" fill="url(#tg)"/><path d="M5 13 L21 7.5 L18.5 20.5 L14 16.5 L11.5 19 L11.5 15 Z" fill="#fff"/><path d="M11.5 15 L19 9.5" stroke="#c8daea" stroke-width="1"/></svg>
<svg style="position:absolute;left:357px;top:1035px" width="30" height="30" viewBox="0 0 30 30"><defs><linearGradient id="eg1" x1="0" y1="0.2" x2="1" y2="0.7"><stop offset="0" stop-color="#1b8fdc"/><stop offset="0.45" stop-color="#33b8ef"/><stop offset="1" stop-color="#72e04e"/></linearGradient></defs><path d="M15 0.5 C24 0.5 29.5 7 29.5 13.5 C29.5 18 26.5 20.5 22.5 20.5 C19.5 20.5 18 19 18.5 17.5 C15 14.5 10 15.5 9.5 19.5 C9 24.5 14 29 20.5 28.5 C18.5 29.5 16.5 29.5 15 29.5 C6.5 29.5 0.5 23 0.5 15 C0.5 6.5 6.5 0.5 15 0.5Z" fill="url(#eg1)"/><path d="M0.5 15 C0.5 9 6 5.5 11.5 7 C7.5 9 6.5 13 7.5 17 C9 24 15 29 21 28.5 C19 29.5 17 29.5 15 29.5 C6.5 29.5 0.5 23 0.5 15Z" fill="#0c4f9c"/><path d="M9.5 19.5 C10 15.5 15 14.5 18.5 17.5 C18 19 19.5 20.5 22.5 20.5 C20.5 24.5 15.5 25.5 12.5 24 C10.5 23 9.5 21.5 9.5 19.5Z" fill="#1565c0"/><ellipse cx="15" cy="18.3" rx="3.6" ry="2.3" fill="#1e232c"/></svg>
<svg style="position:absolute;left:412px;top:1035px" width="30" height="30" viewBox="0 0 30 30"><path d="M22 3.5 L3 19.5 M22 26.5 L3 10.5" stroke="#0d86d8" stroke-width="5.2" stroke-linecap="round"/><path d="M21 0.5 L29.5 4.5 V25.5 L21 29.5 Z" fill="#24a4f2"/></svg>
<svg style="position:absolute;left:467px;top:1039px" width="30" height="22" viewBox="0 0 30 22"><rect x="0" y="0" width="30" height="22" fill="#9aa4ae"/><rect x="1" y="1" width="28" height="20" fill="#e6eef6"/><path d="M1 17 L5 16 L8 4 L10 11 L13 10 L16 16 L18 15 L21 5 L23 13 L26 14 L29 17 V21 H1Z" fill="#8fd0fb"/><path d="M1 17 L5 16 L8 4 L10 11 L13 10 L16 16 L18 15 L21 5 L23 13 L26 14 L29 17" fill="none" stroke="#2a8ee8" stroke-width="0.9"/></svg>
<div style="position:absolute;left:512px;top:1025px;width:50px;height:50px;border-radius:5px;background:#2b2b2e;box-shadow:inset 0 0 0 1px #333337"></div>
<svg style="position:absolute;left:522px;top:1035px" width="29" height="29" viewBox="0 0 29 29"><defs><linearGradient id="sb" x1="0" y1="0" x2="1" y2="0.6"><stop offset="0" stop-color="#0b4a90"/><stop offset="0.7" stop-color="#19c4f8"/></linearGradient><linearGradient id="sb2" x1="0" y1="0" x2="1" y2="1"><stop offset="0" stop-color="#2a9ee8"/><stop offset="0.5" stop-color="#0a4f98"/><stop offset="1" stop-color="#1a7fd0"/></linearGradient><linearGradient id="ss" x1="0" y1="0" x2="1" y2="0"><stop offset="0" stop-color="#9a9a9a"/><stop offset="0.5" stop-color="#f6f6f6"/><stop offset="1" stop-color="#a8a8a8"/></linearGradient></defs><g fill="#f4f4f4"><rect x="11.5" y="1" width="6" height="4.5"/><rect x="11.5" y="23.5" width="6" height="4.5"/><rect x="1" y="11.5" width="4.5" height="6"/><rect x="23.5" y="11.5" width="4.5" height="6"/><rect x="5" y="5" width="4" height="4"/><rect x="20" y="20" width="4" height="4"/></g><path d="M21 4.5 Q28.5 1 27 9 M8 24.5 Q0.5 28 2 20" stroke="#b8b8c0" stroke-width="2" fill="none"/><path d="M2.5 25.5 L8.5 7 L15 9.5 L9.5 23.5 Z" fill="url(#ss)"/><path d="M13.5 19.5 L19.5 5.5 L26.5 3.5 L20.5 22 Z" fill="url(#ss)"/><path d="M1 2.5 Q3 0.5 6 2 L23 6.5 Q19 11 14.5 13.5 Q8 8 4 6 Q1 5 1 2.5Z" fill="url(#sb)"/><path d="M8 18 Q11 15 15 15.5 L26.5 22 Q29 26 27.5 27 Q25 28 22 26 Z" fill="url(#sb2)"/><path d="M14.5 12.5 L16.5 14.5 L14.5 16.5 L12.5 14.5Z" fill="#2a2a2e"/></svg>
<div style="position:absolute;left:148px;top:1070px;width:8px;height:4px;border-radius:2px;background:#9b9da0"></div>
<div style="position:absolute;left:203px;top:1070px;width:8px;height:4px;border-radius:2px;background:#9b9da0"></div>
<div style="position:absolute;left:258px;top:1070px;width:8px;height:4px;border-radius:2px;background:#9b9da0"></div>
<div style="position:absolute;left:313px;top:1070px;width:8px;height:4px;border-radius:2px;background:#9b9da0"></div>
<div style="position:absolute;left:368px;top:1070px;width:8px;height:4px;border-radius:2px;background:#9b9da0"></div>
<div style="position:absolute;left:423px;top:1070px;width:8px;height:4px;border-radius:2px;background:#9b9da0"></div>
<div style="position:absolute;left:478px;top:1070px;width:8px;height:4px;border-radius:2px;background:#9b9da0"></div>
<div style="position:absolute;left:527px;top:1070px;width:20px;height:4px;border-radius:2px;background:#f47c5c"></div>
<svg style="position:absolute;left:1612px;top:1045px" width="17" height="10" viewBox="0 0 17 10"><path d="M1 9 L8.5 1.5 L16 9" stroke="#fff" stroke-width="1.2" fill="none"/></svg>
<svg style="position:absolute;left:1640px;top:1040px" width="20" height="20" viewBox="0 0 20 20"><defs><radialGradient id="vg" cx="0.5" cy="0.5" r="0.7"><stop offset="0" stop-color="#fff"/><stop offset="1" stop-color="#f0a8a8"/></radialGradient></defs><rect x="0" y="0" width="20" height="20" fill="url(#vg)"/><path d="M4 3.5 L9.5 16 L16 3.5" stroke="#d41a1a" stroke-width="2.6" fill="none"/></svg>
<div style="position:absolute;left:1678px;top:1041px;font-size:13.6px;line-height:17px;color:#fff;white-space:pre">ENG</div>
<svg style="position:absolute;left:1730px;top:1042px" width="21" height="16" viewBox="0 0 21 16"><path d="M1.5 6 Q10.5 -2 19.5 6 M4.5 9 Q10.5 3.5 16.5 9 M7.5 12 Q10.5 9.5 13.5 12" stroke="#fff" stroke-width="1.4" fill="none"/><circle cx="10.5" cy="14.5" r="1.4" fill="#fff"/></svg>
<svg style="position:absolute;left:1759px;top:1041px" width="22" height="18" viewBox="0 0 22 18"><path d="M1 6 H4.5 L9.5 1.5 V16.5 L4.5 12 H1 Z" stroke="#fff" stroke-width="1.3" fill="none"/><path d="M12.5 6 Q14.5 9 12.5 12 M15.5 3.5 Q19 9 15.5 14.5 M18.5 1 Q23 9 18.5 17" stroke="#fff" stroke-width="1.3" fill="none"/></svg>
<svg style="position:absolute;left:1789px;top:1041px" width="22" height="18" viewBox="0 0 22 18"><rect x="5" y="4" width="14" height="10" rx="2" stroke="#fff" stroke-width="1.4" fill="none"/><rect x="19.5" y="7" width="2" height="4" fill="#fff"/><rect x="6.5" y="5.5" width="6" height="7" fill="#fff"/><path d="M2 1 V5 M5 1 V5 M1 5 H6 V8 Q6 10 3.5 10 Q1 10 1 8 Z M3.5 10 V17" stroke="#fff" stroke-width="1.2" fill="#fff"/></svg>
<div style="position:absolute;left:1820px;top:1031px;width:76px;text-align:right;font-size:13.8px;line-height:18px;color:#fff;white-space:pre">11:01 AM</div>
<div style="position:absolute;left:1820px;top:1050px;width:76px;text-align:right;font-size:14.2px;line-height:18px;color:#fff;white-space:pre">7/21/2022</div>
</body></html>
